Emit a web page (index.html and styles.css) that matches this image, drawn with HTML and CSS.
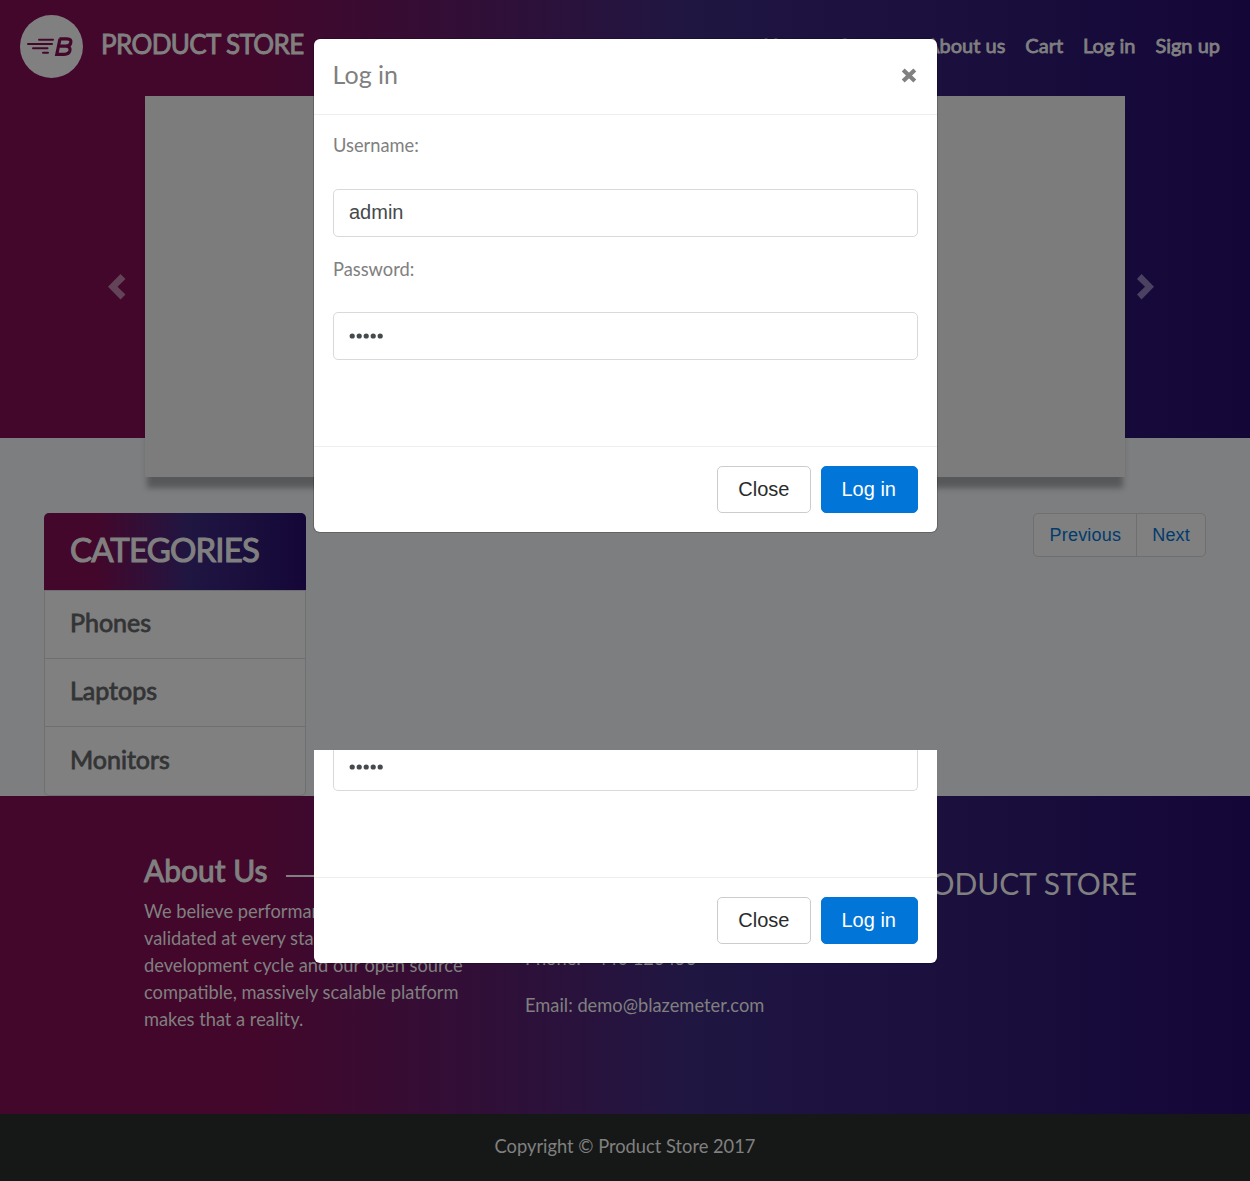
FILE: index.html
```html
<!DOCTYPE html>
<html lang="en">
<head>
<meta charset="utf-8">
<title>STORE</title>
<link rel="stylesheet" href="styles.css">
</head>
<body>
<header class="hero">
  <nav class="navbar">
    <a class="brand">
      <svg class="logo" width="63" height="63" viewBox="0 0 63 63">
        <circle cx="31.5" cy="31.5" r="31.5" fill="#808080"/>
        <g fill="none" stroke="#43072b" stroke-width="2" stroke-linecap="round">
          <path d="M19 24.8H33M8 29H32M13 33.3H27.500M23 37.700H28"/>
          <path d="M39.500 23.800H47Q51.800 23.800 50.700 28Q49.900 31.200 46 31.200Q50.700 31.400 49.900 35.600Q49 39.300 44.200 39.300H36.800L40 23.800M38 31.200H46" stroke-width="3.200" stroke-linecap="butt"/>
        </g>
      </svg>
      <span class="brand-name">PRODUCT STORE</span>
    </a>
    <div class="nav-links"><a>Home</a><a>Contact</a><a>About us</a><a>Cart</a><a>Log in</a><a>Sign up</a></div>
  </nav>
  <div class="carousel">
    <svg class="arrow" width="18" height="26" viewBox="0 0 18 26"><path d="M12.500 0L0 12.700L12.500 25.500L17.500 20.500L9.500 12.700L17.500 5Z" fill="#634358"/></svg>
    <div class="slide"></div>
    <svg class="arrow" width="18" height="26" viewBox="0 0 18 26"><path d="M4.500 0L17 12.700L4.500 25.500L0 20.500L8 12.700L0 5Z" fill="#4b4262"/></svg>
  </div>
</header>
<main class="content">
  <div class="categories">
    <a class="cat-head">CATEGORIES</a>
    <a class="cat">Phones</a>
    <a class="cat">Laptops</a>
    <a class="cat">Monitors</a>
  </div>
  <div class="pager"><a class="page">Previous</a><a class="page">Next</a></div>
</main>
<section class="footer">
  <div class="about">
    <h4 class="foot-title">About Us</h4>
    <p class="foot-text">We believe performance needs to be validated at every stage of the software development cycle and our open source compatible, massively scalable platform makes that a reality.</p>
  </div>
  <div class="touch">
    <p class="foot-text">Phone: +440 123456</p>
    <p class="foot-text">Email: demo@blazemeter.com</p>
  </div>
  <div class="foot-brand">PRODUCT STORE</div>
</section>
<footer class="copyright">Copyright © Product Store 2017</footer>

<div class="modal-window">
  <div class="modal">
    <div class="modal-head"><span>Log in</span>
      <svg width="16" height="15" viewBox="0 0 16 15"><path d="M2.200 2L13.800 13M13.800 2L2.200 13" stroke="#808080" stroke-width="4.200"/></svg>
    </div>
    <div class="modal-body">
      <div class="label">Username:</div><div class="field">admin</div>
      <div class="label second">Password:</div><div class="field password"><svg width="36" height="8" viewBox="0 0 36 8" fill="#464a4c"><circle cx="3.200" cy="4" r="2.600"/><circle cx="10.200" cy="4" r="2.600"/><circle cx="17.200" cy="4" r="2.600"/><circle cx="24.200" cy="4" r="2.600"/><circle cx="31.200" cy="4" r="2.600"/></svg></div>
    </div>
    <div class="modal-foot"><span class="btn">Close</span><span class="btn primary">Log in</span></div>
  </div>
</div>
<div class="modal-window lower">
  <div class="modal">
    <div class="modal-body">
      <div class="field"><svg width="36" height="8" viewBox="0 0 36 8" fill="#464a4c"><circle cx="3.200" cy="4" r="2.600"/><circle cx="10.200" cy="4" r="2.600"/><circle cx="17.200" cy="4" r="2.600"/><circle cx="24.200" cy="4" r="2.600"/><circle cx="31.200" cy="4" r="2.600"/></svg></div>
    </div>
    <div class="modal-foot"><span class="btn">Close</span><span class="btn primary">Log in</span></div>
  </div>
</div>
</body>
</html>
```
FILE: styles.css
```css
* { box-sizing: border-box; }
body {
  position: relative;
  margin: 0;
  background: #7d7e80;
  font-family: Lato, sans-serif;
  font-size: 18.3px;
  line-height: 27px;
  color: #808080;
}
h4, p { margin: 0; }
.hero, .cat-head, .footer {
  background-image: linear-gradient(to right, #43072b 0%, #43072b 20%, #201642 55%, #140738 100%);
}
.hero { height: 438px; }
.navbar {
  display: flex;
  justify-content: space-between;
  height: 96px;
  padding: 15px 30px 0 20px;
}
.brand { display: flex; }
.brand-name {
  margin: 10px 0 0 18px;
  font-size: 26px;
  line-height: 38px;
  letter-spacing: -.63px;
  -webkit-text-stroke: 0.9px #808080;
}
.nav-links {
  display: flex;
  gap: 20px;
  padding-top: 17px;
  font-size: 20px;
  -webkit-text-stroke: 0.8px #808080;
}
.carousel {
  display: flex;
  align-items: center;
  gap: 19px;
  height: 381px;
  padding-left: 108px;
}
.carousel .arrow:last-child { margin-left: -7px; }
.slide {
  width: 980px;
  height: 381px;
  background: #7c7c7c;
  box-shadow: 0 13px 6px -2px rgba(0, 0, 0, .3);
}
.content {
  display: flex;
  justify-content: space-between;
  align-items: flex-start;
  height: 358px;
  padding: 75px 44px 0;
}
.categories { width: 262px; color: #333435; }
.cat-head {
  display: block;
  height: 77px;
  padding-left: 26px;
  border-radius: 5px 5px 0 0;
  font-size: 33px;
  line-height: 73px;
  letter-spacing: -.85px;
  color: #808080;
  -webkit-text-stroke: 1.1px #808080;
}
.cat {
  display: block;
  height: 68px;
  padding-left: 25px;
  border: 1px solid #6e6f70;
  border-bottom: 0;
  background: #808080;
  font-size: 25px;
  line-height: 63px;
  -webkit-text-stroke: 0.8px #333435;
}
.cat:last-child { height: 70px; border-bottom: 1px solid #6e6f70; border-radius: 0 0 5px 5px; line-height: 64px; }
.pager { display: flex; border: 1px solid #6e6f70; border-radius: 5px; background: #808080; }
.page {
  height: 42px;
  padding: 0 15px 0 15.4px;
  font: 18px/42px "Liberation Sans", sans-serif;
  letter-spacing: .2px;
  color: #013b6d;
}
.page + .page { padding-left: 15px; border-left: 1px solid #6e6f70; }
.footer { display: flex; height: 318px; padding-left: 144px; }
.about { width: 381px; padding-top: 54px; }
.foot-title {
  display: flex;
  align-items: center;
  gap: 18px;
  width: 325px;
  height: 48px;
  padding-bottom: 8px;
  font-size: 30px;
  font-weight: 400;
  -webkit-text-stroke: 1px #808080;
}
.foot-title::after { content: ""; flex: 1; height: 2px; margin-top: 11px; background: #808080; }
.about .foot-text { width: 325px; }
.touch { width: 381px; padding-top: 149px; }
.touch .foot-text { margin-bottom: 20px; }
.foot-brand {
  display: flex;
  justify-content: flex-end;
  width: 231px;
  padding-top: 67px;
  font-size: 30px;
  line-height: 40px;
  white-space: nowrap;
}
.copyright { height: 67px; background: #161817; text-align: center; line-height: 65px; }
.modal-window { position: absolute; left: 314px; top: 39px; width: 623px; height: 493px; }
.modal {
  display: flex;
  flex-direction: column;
  height: 100%;
  border-radius: 6px;
  background: #fff;
  box-shadow: 0 0 0 1px rgba(0, 0, 0, .2);
}
.lower { top: 750px; height: 214px; overflow: hidden; clip-path: inset(0 -1px -1px); }
.lower .modal { border-radius: 0 0 6px 6px; height: 213px; }
.modal-head {
  display: flex;
  justify-content: space-between;
  align-items: center;
  height: 76px;
  padding: 0 20px 3px 18.6px;
  border-bottom: 1px solid #eceeef;
  font-size: 25px;
}
.modal-head span { padding-bottom: 2px; }
.modal-body { flex: 1; padding: 16px 19px 0; }
.label { height: 58px; line-height: 28px; }
.label.second { line-height: 30px; }
.field {
  display: flex;
  align-items: center;
  height: 48px;
  margin-bottom: 17px;
  padding: 0 15px 2px;
  border: 1px solid #d9d9d9;
  border-radius: 5px;
  font: 20px "Liberation Sans", sans-serif;
  color: #464a4c;
}
.field.password { padding-bottom: 1px; }
.lower .modal-body { padding-top: 0; }
.lower .field { height: 41px; border-top: 0; border-radius: 0 0 5px 5px; padding-bottom: 7px; }
.modal-foot {
  display: flex;
  justify-content: flex-end;
  gap: 10px;
  height: 86px;
  padding: 19px;
  border-top: 1px solid #eceeef;
}
.btn {
  height: 47px;
  padding: 0 20px;
  border: 1px solid #ccc;
  border-radius: 5px;
  font: 20px/44px "Liberation Sans", sans-serif;
  color: #292b2c;
}
.primary { padding-right: 21px; border-color: #0275d8; background: #0275d8; color: #fff; }
```
